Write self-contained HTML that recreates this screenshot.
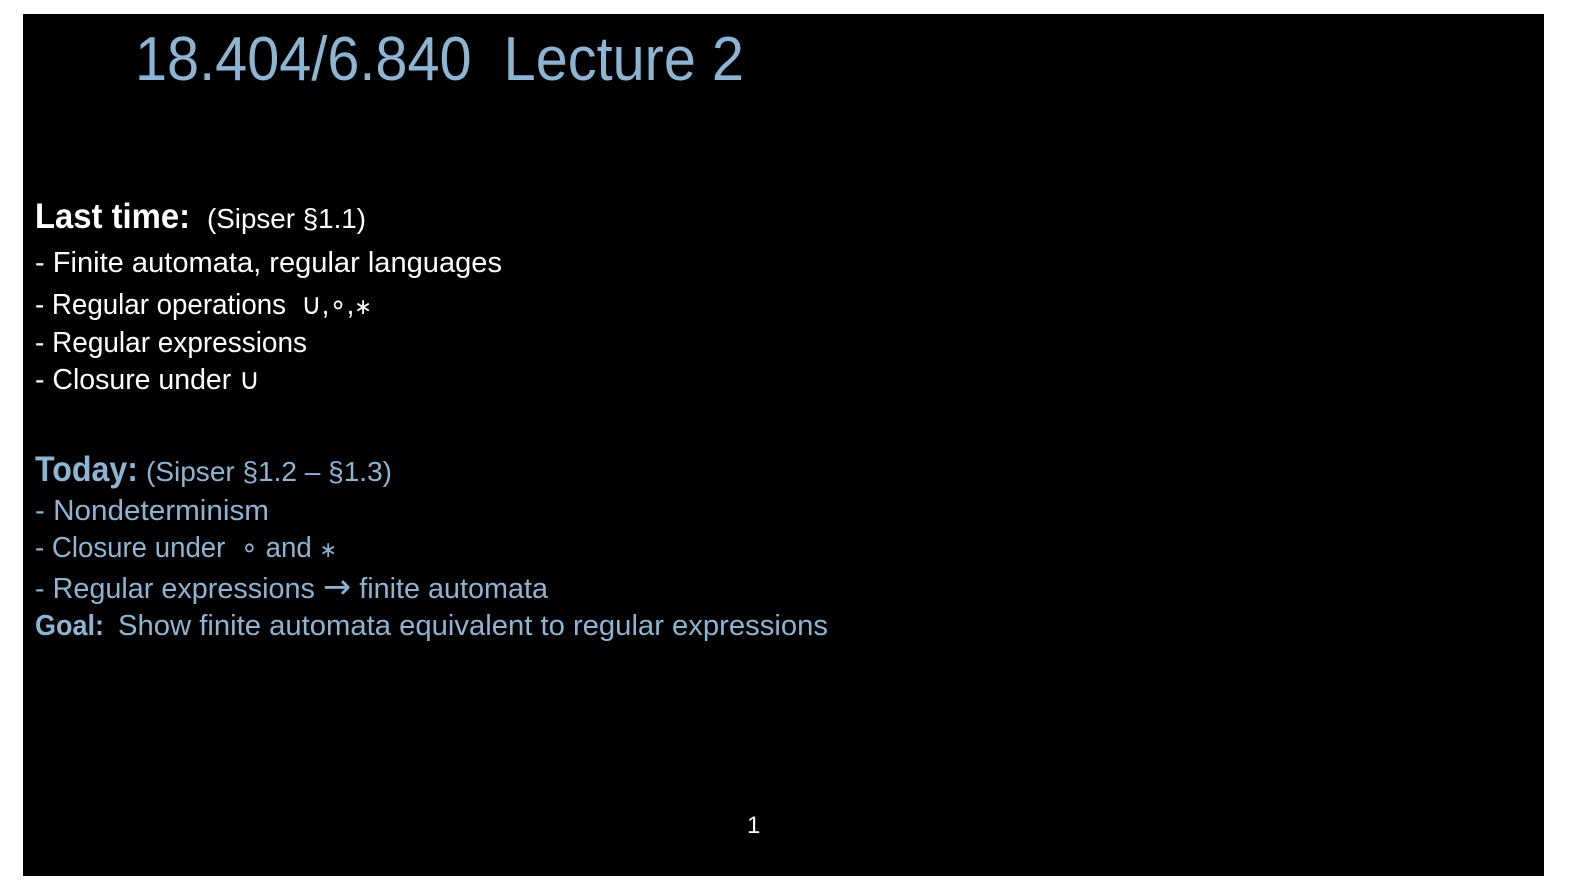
<!DOCTYPE html>
<html><head><meta charset="utf-8"><style>
html,body{margin:0;padding:0;background:#fff;width:1584px;height:891px;overflow:hidden}
svg{position:absolute;left:0;top:0}
text{font-family:"Liberation Sans","DejaVu Sans",sans-serif;white-space:pre}
.w{fill:#fff}.b{fill:#8db4d3}
</style></head><body>
<svg width="1584" height="891" xmlns="http://www.w3.org/2000/svg" xml:space="preserve">
<rect x="23" y="14" width="1521" height="862" fill="#000"/>
<text class="b" x="135" y="80" font-size="62" textLength="609" lengthAdjust="spacingAndGlyphs">18.404/6.840&#160; Lecture 2</text>
<text class="w" x="35" y="228" font-size="35" font-weight="bold" textLength="155" lengthAdjust="spacingAndGlyphs">Last time:</text>
<text class="w" x="207" y="228" font-size="28" textLength="159" lengthAdjust="spacingAndGlyphs">(Sipser §1.1)</text>
<text class="w" x="35" y="272" font-size="29" textLength="467" lengthAdjust="spacingAndGlyphs">- Finite automata, regular languages</text>
<text class="w" x="35" y="314" font-size="29" textLength="337" lengthAdjust="spacingAndGlyphs">- Regular operations&#160; ∪,∘,<tspan font-size="22">∗</tspan></text>
<text class="w" x="35" y="352" font-size="29" textLength="272" lengthAdjust="spacingAndGlyphs">- Regular expressions</text>
<text class="w" x="35" y="389" font-size="29" textLength="225" lengthAdjust="spacingAndGlyphs">- Closure under ∪</text>
<text class="b" x="35" y="481" font-size="35" font-weight="bold" textLength="103" lengthAdjust="spacingAndGlyphs">Today:</text>
<text class="b" x="146" y="481" font-size="28" textLength="246" lengthAdjust="spacingAndGlyphs">(Sipser §1.2 – §1.3)</text>
<text class="b" x="35" y="520" font-size="29" textLength="234" lengthAdjust="spacingAndGlyphs">- Nondeterminism</text>
<text class="b" x="35" y="557" font-size="29" textLength="302" lengthAdjust="spacingAndGlyphs">- Closure under&#160; ∘ and <tspan font-size="22">∗</tspan></text>
<text class="b" x="35" y="598" font-size="29" textLength="513" lengthAdjust="spacingAndGlyphs">- Regular expressions <tspan font-size="34" font-family="DejaVu Sans">→</tspan> finite automata</text>
<text class="b" x="35" y="635" font-size="29" font-weight="bold" textLength="69" lengthAdjust="spacingAndGlyphs">Goal:</text>
<text class="b" x="118" y="635" font-size="29" textLength="710" lengthAdjust="spacingAndGlyphs">Show finite automata equivalent to regular expressions</text>
<text class="w" x="747" y="833" font-size="24">1</text>
</svg>
</body></html>
